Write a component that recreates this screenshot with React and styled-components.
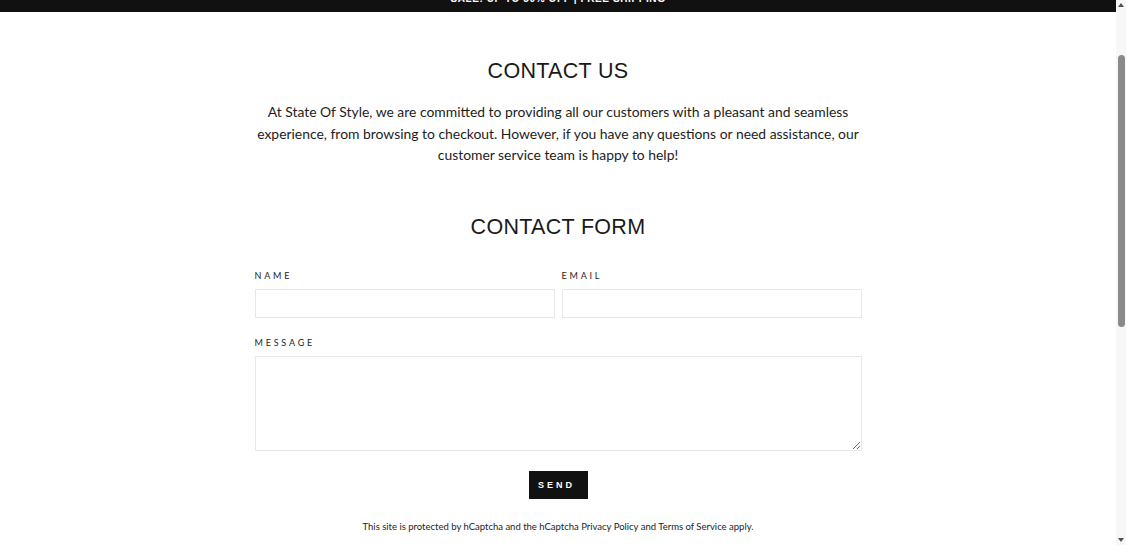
import React, { useLayoutEffect, useRef } from 'react';
import styled, { createGlobalStyle } from 'styled-components';

const GlobalStyle = createGlobalStyle`
  html, body {
    margin: 0;
    padding: 0;
    background: #fff;
    overflow: hidden;
  }
  * { box-sizing: border-box; }
`;

const Frame = styled.div`
  display: flex;
  height: 100vh;
`;

const Viewport = styled.div`
  flex: 1;
  overflow-y: scroll;
  scrollbar-width: none;
  font-family: 'Lato', 'Liberation Sans', sans-serif;
  color: #1c1d1d;

  &::-webkit-scrollbar {
    display: none;
  }
`;

/* drawn scrollbar, the page is shown scrolled down a little */
const ScrollTrack = styled.div`
  width: 10px;
  flex-shrink: 0;
  background: #f7f7f7;
  display: flex;
  flex-direction: column;
  align-items: center;
`;

const Arrow = styled.div`
  height: 10px;
  width: 10px;
  display: flex;
  align-items: center;
  justify-content: center;

  &::after {
    content: '';
    border-left: 3.5px solid transparent;
    border-right: 3.5px solid transparent;
    ${p => (p.$down ? 'border-top: 4px solid #505050;' : 'border-bottom: 4px solid #505050;')}
  }
`;

const Thumb = styled.div`
  width: 7px;
  height: 272px;
  margin-top: 45px;
  border-radius: 4px;
  background: #8a8a8a;
`;

const TrackSpace = styled.div`
  flex: 1;
`;

const Header = styled.header`
  height: 99px;
  background: #111;
  display: flex;
  flex-direction: column;
  justify-content: flex-end;
  align-items: center;
  padding-bottom: 8px;
`;

const Announcement = styled.p`
  margin: 0;
  color: #fff;
  font-family: 'Liberation Sans', sans-serif;
  font-weight: 700;
  font-size: 10px;
  line-height: 11px;
  letter-spacing: 0.6px;
`;

const Main = styled.main`
  display: flex;
  flex-direction: column;
  align-items: center;
  padding: 46px 0 520px;
`;

const Title = styled.h1`
  margin: 0;
  font-family: 'Liberation Sans', sans-serif;
  font-weight: 400;
  font-size: 21.5px;
  line-height: 26px;
  letter-spacing: 0.3px;
  text-transform: uppercase;
  color: #1a1a1a;
`;

const Intro = styled.p`
  margin: 17px 0 0;
  max-width: 610px;
  text-align: center;
  font-size: 13.9px;
  line-height: 21.5px;
`;

const FormTitle = styled(Title)`
  margin-top: 48px;
`;

const Form = styled.form`
  width: 607px;
  margin-top: 30px;
  display: flex;
  flex-direction: column;
  align-items: center;
`;

const Row = styled.div`
  width: 100%;
  display: grid;
  grid-template-columns: ${p => (p.$cols === 2 ? '1fr 1fr' : '1fr')};
  gap: 7px;
  margin-bottom: ${p => p.$gap || 0}px;
`;

const Field = styled.label`
  display: flex;
  flex-direction: column;
`;

const Label = styled.span`
  font-size: 9px;
  line-height: 12px;
  letter-spacing: 2.8px;
  text-transform: uppercase;
  color: #1c1d1d;
  margin-bottom: 7px;
`;

const Input = styled.input`
  height: 29px;
  border: 1px solid #e8e8e8;
  background: #fff;
  outline: none;
  font: inherit;
`;

const TextArea = styled.textarea`
  height: 95px;
  border: 1px solid #e8e8e8;
  background: #fff;
  outline: none;
  font: inherit;
  resize: vertical;
`;

const SendButton = styled.button`
  margin-top: 20px;
  width: 59px;
  height: 28px;
  border: none;
  background: #111;
  color: #fff;
  font-family: 'Liberation Sans', sans-serif;
  font-weight: 700;
  font-size: 9px;
  letter-spacing: 3px;
  padding-left: 3px;
  text-transform: uppercase;
  cursor: pointer;
`;

const Legal = styled.p`
  margin: 21px 0 0;
  font-size: 9.5px;
  line-height: 14px;
  color: #1c1d1d;
`;

export default function App() {
  const ref = useRef(null);

  useLayoutEffect(() => {
    if (ref.current) ref.current.scrollTop = 87;
  }, []);

  return (
    <Frame>
      <GlobalStyle />
      <Viewport ref={ref}>
        <Header>
          <Announcement>SALE! UP TO 50% OFF | FREE SHIPPING</Announcement>
        </Header>
        <Main>
          <Title>Contact Us</Title>
          <Intro>
            At State Of Style, we are committed to providing all our customers with a pleasant and seamless
            experience, from browsing to checkout. However, if you have any questions or need assistance, our
            customer service team is happy to help!
          </Intro>
          <FormTitle>Contact Form</FormTitle>
          <Form onSubmit={e => e.preventDefault()}>
            <Row $cols={2} $gap={19}>
              <Field>
                <Label>Name</Label>
                <Input type="text" />
              </Field>
              <Field>
                <Label>Email</Label>
                <Input type="email" />
              </Field>
            </Row>
            <Row>
              <Field>
                <Label>Message</Label>
                <TextArea />
              </Field>
            </Row>
            <SendButton type="submit">Send</SendButton>
            <Legal>
              This site is protected by hCaptcha and the hCaptcha Privacy Policy and Terms of Service apply.
            </Legal>
          </Form>
        </Main>
      </Viewport>
      <ScrollTrack>
        <Arrow />
        <Thumb />
        <TrackSpace />
        <Arrow $down />
      </ScrollTrack>
    </Frame>
  );
}
